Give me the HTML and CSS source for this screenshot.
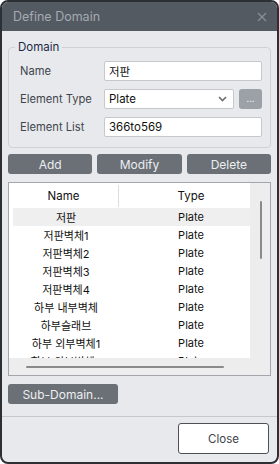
FILE: index.html
```html
<!DOCTYPE html>
<html>
<head>
<meta charset="utf-8">
<link rel="stylesheet" href="styles.css">
</head>
<body>
<div class="window">
  <div class="titlebar">
    <span class="title">Define Domain</span>
    <svg class="close-x" width="10" height="10" viewBox="0 0 10 10"><path d="M1 1 L9 9 M9 1 L1 9" stroke="#8a9097" stroke-width="1.2" fill="none"/></svg>
  </div>
  <div class="content">
    <fieldset class="group">
      <legend>Domain</legend>
      <div class="row">
        <label>Name</label>
        <div class="input">저판</div>
      </div>
      <div class="row">
        <label>Element Type</label>
        <div class="select">
          <span>Plate</span>
          <svg width="9" height="6" viewBox="0 0 9 6"><path d="M1 1 L4.5 4.5 L8 1" stroke="#6a6e73" stroke-width="1.6" fill="none"/></svg>
        </div>
        <div class="dots">...</div>
      </div>
      <div class="row">
        <label>Element List</label>
        <div class="input">366to569</div>
      </div>
    </fieldset>
    <div class="actions">
      <div class="btn">Add</div>
      <div class="btn">Modify</div>
      <div class="btn">Delete</div>
    </div>
    <div class="list">
      <div class="list-main">
        <div class="viewport">
          <div class="head">
            <div class="c1">Name</div>
            <div class="c2">Type</div>
          </div>
          <div class="rows">
            <div class="r sel"><div class="c1">저판</div><div class="c2">Plate</div></div>
            <div class="r"><div class="c1">저판벽체1</div><div class="c2">Plate</div></div>
            <div class="r"><div class="c1">저판벽체2</div><div class="c2">Plate</div></div>
            <div class="r"><div class="c1">저판벽체3</div><div class="c2">Plate</div></div>
            <div class="r"><div class="c1">저판벽체4</div><div class="c2">Plate</div></div>
            <div class="r"><div class="c1">하부 내부벽체</div><div class="c2">Plate</div></div>
            <div class="r"><div class="c1">하부슬래브</div><div class="c2">Plate</div></div>
            <div class="r"><div class="c1">하부 외부벽체1</div><div class="c2">Plate</div></div>
            <div class="r"><div class="c1">하부 외부벽체2</div><div class="c2">Plate</div></div>
          </div>
        </div>
        <div class="vscroll"><div class="vthumb"></div></div>
      </div>
      <div class="hscroll"><div class="hthumb"></div></div>
    </div>
    <div class="sub">
      <div class="btn sub-btn">Sub-Domain...</div>
    </div>
  </div>
  <div class="footer">
    <div class="close-btn">Close</div>
  </div>
</div>
</body>
</html>
```
FILE: styles.css
```css
* { box-sizing: border-box; }
body {
  margin: 0;
  background: #ffffff;
  font-family: Inter, "Noto Sans", "Noto Sans CJK KR", sans-serif;
  font-size: 11.5px;
}
.window {
  width: 279px;
  height: 464px;
  border: 2px solid #2c3035;
  border-radius: 8px;
  overflow: hidden;
  background: #e8e9ec;
  display: flex;
  flex-direction: column;
}
.titlebar {
  height: 29px;
  flex: none;
  background: #545a62;
  display: flex;
  align-items: center;
  justify-content: space-between;
  padding: 0 10px 0 11px;
}
.title {
  color: #a6abb1;
  font-size: 12.5px;
}
.close-x { display: block; }
.content {
  flex: 1;
  padding: 8px 6px 0 6px;
  display: flex;
  flex-direction: column;
}
.group {
  margin: 0;
  border: 1px solid #cfd1d5;
  border-radius: 4px;
  padding: 6px 8px 10px 11px;
  display: flex;
  flex-direction: column;
  gap: 8px;
}
.group legend {
  padding: 0 3px;
  margin-left: -5px;
  color: #1c2a48;
  font-size: 11.5px;
  line-height: 16px;
}
.row {
  display: flex;
  align-items: center;
  height: 20px;
}
.row label {
  width: 84px;
  color: #40454c;
  font-size: 11.2px;
}
.input, .select {
  height: 20px;
  background: #fff;
  border: 1px solid #c6c8cc;
  border-radius: 2px;
  padding: 0 4px;
  display: flex;
  align-items: center;
  color: #111;
  font-size: 11.5px;
}
.input { flex: 1; }
.select {
  width: 130px;
  justify-content: space-between;
  padding-right: 6px;
}
.select svg { display: block; }
.dots {
  width: 23px;
  height: 20px;
  margin-left: 5px;
  background: #9ca1a7;
  border-radius: 3px;
  color: #f2eef0;
  font-size: 9px;
  display: flex;
  align-items: center;
  justify-content: center;
  padding-bottom: 2px;
}
.actions {
  margin-top: 6px;
  display: flex;
  gap: 5px;
}
.btn {
  height: 20px;
  background: #6b7077;
  border-radius: 3px;
  color: #eceef0;
  font-size: 12px;
  display: flex;
  align-items: center;
  justify-content: center;
}
.actions .btn { flex: 1; }
.list {
  margin-top: 8px;
  height: 194px;
  border: 1px solid #a3a6aa;
  background: #ededed;
  display: flex;
  flex-direction: column;
  font-size: 11px;
}
.list-main {
  flex: 1;
  display: flex;
  min-height: 0;
}
.viewport {
  width: 241px;
  flex: none;
  background: #fff;
  overflow: hidden;
}
.head {
  height: 25px;
  display: flex;
  align-items: center;
  color: #111;
  font-size: 11.5px;
}
.head .c1 {
  flex: none;
  width: 110px;
  height: 22px;
  border-right: 1px solid #dcdcdc;
  display: flex;
  align-items: center;
  justify-content: center;
}
.head .c2 {
  flex: none;
  width: 144px;
  text-align: center;
}
.rows { padding-left: 4px; }
.r {
  height: 18px;
  display: flex;
  align-items: center;
  color: #111;
  width: 250px;
}
.r.sel { background: #efefef; }
.r .c1 { flex: none; width: 106px; text-align: center; }
.r .c2 { flex: none; width: 144px; text-align: center; }
.vscroll {
  flex: 1;
  display: flex;
  justify-content: center;
  padding-top: 18px;
  padding-left: 1px;
}
.vthumb {
  width: 2px;
  height: 58px;
  background: #8a8a8a;
  border-radius: 1px;
}
.hscroll {
  height: 17px;
  flex: none;
  padding: 8px 0 0 17px;
}
.hthumb {
  width: 198px;
  height: 2px;
  background: #8a8a8a;
  border-radius: 1px;
}
.sub {
  margin-top: 8px;
  display: flex;
}
.sub-btn {
  width: 110px;
}
.footer {
  flex: none;
  height: 46px;
  border-top: 1px solid #c6c8cc;
  display: flex;
  justify-content: flex-end;
  align-items: flex-start;
  padding: 6px 8px 0 0;
}
.close-btn {
  width: 91px;
  height: 31px;
  background: #fff;
  border: 1px solid #4d5157;
  border-radius: 3px;
  color: #3e4247;
  font-size: 11.5px;
  display: flex;
  align-items: center;
  justify-content: center;
}
```
